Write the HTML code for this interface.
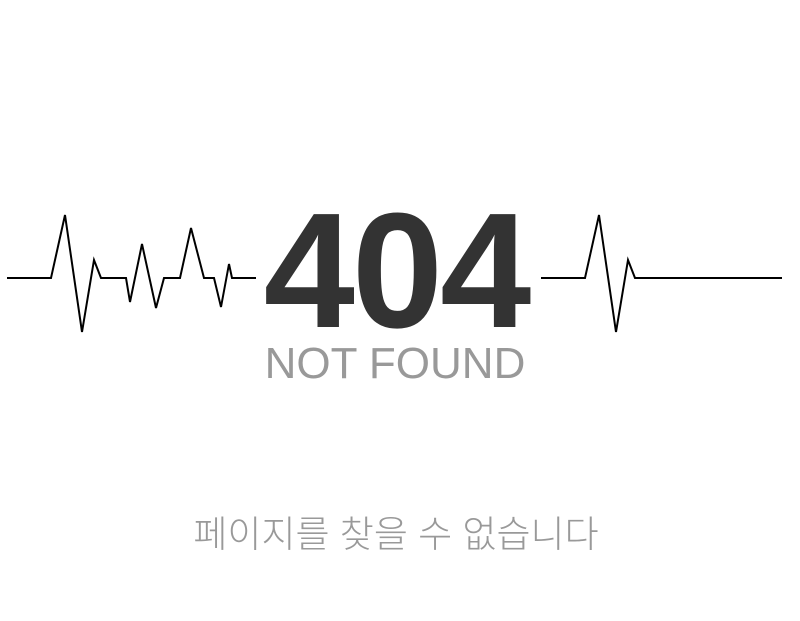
<!DOCTYPE html>
<html><head><meta charset="utf-8"><style>
html,body{margin:0;padding:0;background:#fff;width:800px;height:621px;overflow:hidden;position:relative}
.t{position:absolute;left:0;width:790px;text-align:center;white-space:nowrap}
#n{top:189px;font:bold 164px/1 "Liberation Sans",sans-serif;color:#333;letter-spacing:-3px;left:0;width:792px}
#nf{top:342px;font:300 44px/1 "Liberation Sans",sans-serif;color:#999;left:0;width:790px}
#k{top:516px;font:300 37px/1 "Liberation Sans","Noto Sans CJK KR",sans-serif;color:#999;width:792px}
svg{position:absolute;left:0;top:0}
</style></head><body>
<svg width="800" height="621"><g fill="none" stroke="#000" stroke-width="2">
<polyline points="7,278 51,278 65,215 82,332 94,260 101,278 126,278 130,302 142,244 156,308 164,278 180,278 191,228 204,278 214,278 221,307 229,264 232,278 256,278"/>
<polyline points="541,278 585,278 599,215 616,332 628,260 635,278 782,278"/>
</g></svg>
<div class="t" id="n">404</div>
<div class="t" id="nf">NOT FOUND</div>
<div class="t" id="k">페이지를 찾을 수 없습니다</div>
</body></html>
